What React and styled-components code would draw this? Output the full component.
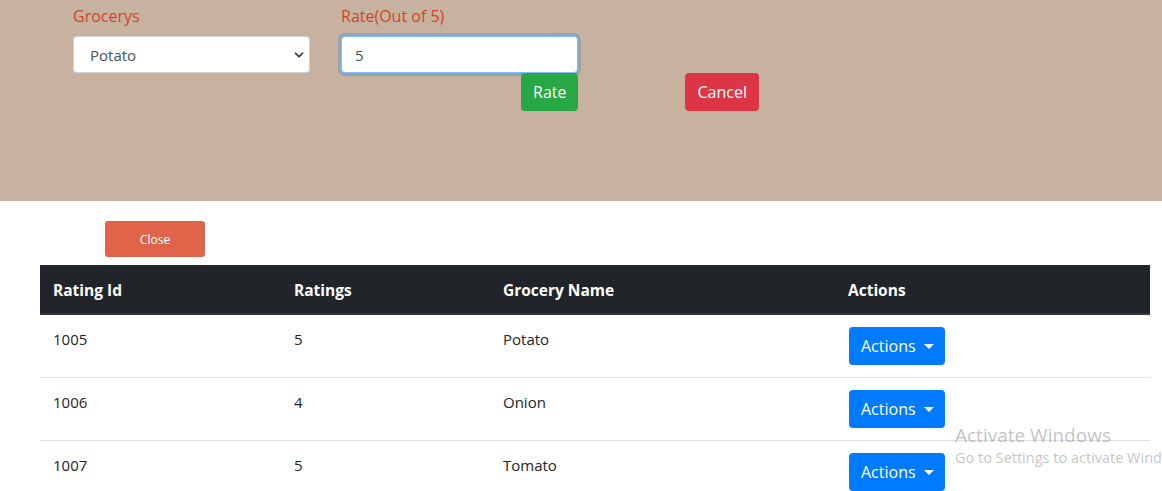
import React from "react";
import styled, { createGlobalStyle } from "styled-components";
import { ChevronDown } from "lucide-react";

const GlobalStyle = createGlobalStyle`
  html, body {
    margin: 0;
    padding: 0;
    background: #fff;
    font-family: "Segoe UI", "Open Sans", "Noto Sans", sans-serif;
    font-size: 16px;
    color: #212529;
  }
  * { box-sizing: border-box; }
`;

const Page = styled.div`
  position: relative;
  width: 1162px;
  height: 491px;
  overflow: hidden;
`;

const RatePanel = styled.section`
  background: #c6b29e;
  height: 201px;
  padding: 4px 0 0 73px;
`;

const FieldRow = styled.div`
  display: flex;
  gap: 31px;
`;

const FieldGroup = styled.div`
  display: flex;
  flex-direction: column;
  width: 237px;
`;

const Label = styled.label`
  color: #d2432c;
  font-size: 16px;
  line-height: 24px;
  margin-bottom: 8px;
`;

const SelectWrap = styled.div`
  position: relative;
  height: 37px;
  svg {
    position: absolute;
    right: 4px;
    top: 12px;
    color: #333;
    pointer-events: none;
  }
`;

const Select = styled.select`
  appearance: none;
  width: 100%;
  height: 37px;
  border: 1px solid #ced4da;
  border-radius: 4px;
  background: #fff;
  padding: 0 12px 0 16px;
  font: inherit;
  font-size: 15px;
  color: #495057;
`;

const Input = styled.input`
  width: 100%;
  height: 37px;
  border: 1px solid #80bdff;
  border-radius: 4px;
  background: #fff;
  padding: 0 13px;
  font: inherit;
  font-size: 15px;
  color: #495057;
  outline: none;
  box-shadow: 0 0 0 3px rgba(0, 123, 255, 0.25);
`;

const ButtonRow = styled.div`
  display: flex;
  align-items: flex-start;
`;

const Button = styled.button`
  height: 38px;
  padding: 0 12px;
  border: none;
  border-radius: 4px;
  font: inherit;
  font-size: 16px;
  color: #fff;
  background: ${({ $variant }) =>
    $variant === "danger" ? "#dc3545" : $variant === "success" ? "#28a745" : "#007bff"};
  margin-left: ${({ $offset }) => $offset || 0}px;
  cursor: pointer;
`;

const CloseButton = styled.button`
  display: block;
  width: 100px;
  height: 36px;
  margin: 20px 0 8px 105px;
  border: none;
  border-radius: 3px;
  background: #e0644a;
  color: #fff;
  font: inherit;
  font-size: 12px;
`;

const Table = styled.table`
  margin-left: 40px;
  width: 1110px;
  border-collapse: collapse;
`;

const Th = styled.th`
  background: #212529;
  color: #fff;
  text-align: left;
  font-weight: 700;
  font-size: 15.5px;
  padding: 13px 13px 11px;
  line-height: 24px;
  border-bottom: 2px solid #32383e;
  width: ${({ $w }) => $w}px;
`;

const Td = styled.td`
  padding: 12px 13px;
  line-height: 24px;
  vertical-align: top;
  border-top: 1px solid #dee2e6;
  font-size: 15px;
`;

const ActionsButton = styled(Button)`
  margin-left: 1px;
  padding: 0 11px 0 12px;
  &::after {
    content: "";
    display: inline-block;
    margin-left: 8px;
    vertical-align: 3px;
    border-top: 5px solid #fff;
    border-left: 5px solid transparent;
    border-right: 5px solid transparent;
  }
`;

const Watermark = styled.div`
  position: absolute;
  left: 955px;
  top: 423px;
  color: rgba(120, 120, 120, 0.45);
  white-space: nowrap;
  pointer-events: none;
`;

const WatermarkTitle = styled.div`
  font-size: 19px;
  line-height: 24px;
`;

const WatermarkSub = styled.div`
  font-size: 14.5px;
  line-height: 21px;
`;

const ratings = [
  { id: 1005, rating: 5, name: "Potato" },
  { id: 1006, rating: 4, name: "Onion" },
  { id: 1007, rating: 5, name: "Tomato" },
];

export default function App() {
  return (
    <Page>
      <GlobalStyle />
      <RatePanel>
        <FieldRow>
          <FieldGroup>
            <Label>Grocerys</Label>
            <SelectWrap>
              <Select defaultValue="Potato">
                <option>Potato</option>
                <option>Onion</option>
                <option>Tomato</option>
              </Select>
              <ChevronDown size={14} strokeWidth={3} />
            </SelectWrap>
          </FieldGroup>
          <FieldGroup>
            <Label>Rate(Out of 5)</Label>
            <Input defaultValue="5" />
          </FieldGroup>
        </FieldRow>
        <ButtonRow>
          <Button $variant="success" $offset={448}>Rate</Button>
          <Button $variant="danger" $offset={107}>Cancel</Button>
        </ButtonRow>
      </RatePanel>

      <CloseButton>Close</CloseButton>

      <Table>
        <thead>
          <tr>
            <Th $w={241}>Rating Id</Th>
            <Th $w={209}>Ratings</Th>
            <Th $w={345}>Grocery Name</Th>
            <Th>Actions</Th>
          </tr>
        </thead>
        <tbody>
          {ratings.map((r) => (
            <tr key={r.id}>
              <Td>{r.id}</Td>
              <Td>{r.rating}</Td>
              <Td>{r.name}</Td>
              <Td>
                <ActionsButton>Actions</ActionsButton>
              </Td>
            </tr>
          ))}
        </tbody>
      </Table>

      <Watermark>
        <WatermarkTitle>Activate Windows</WatermarkTitle>
        <WatermarkSub>Go to Settings to activate Windows.</WatermarkSub>
      </Watermark>
    </Page>
  );
}
